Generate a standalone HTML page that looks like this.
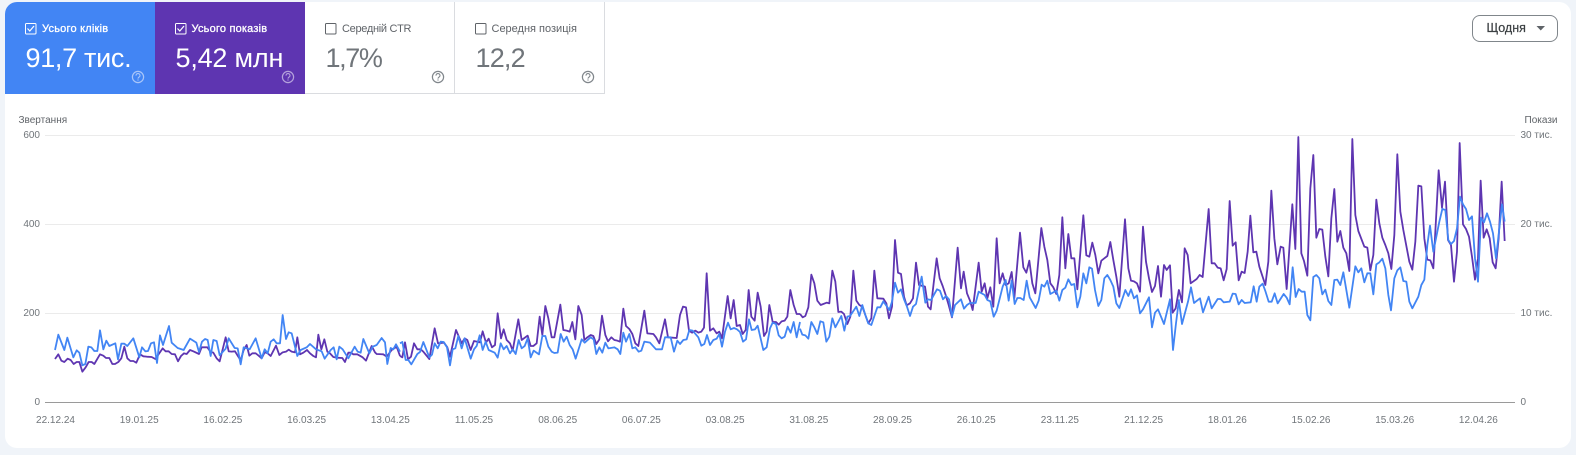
<!DOCTYPE html>
<html lang="uk"><head><meta charset="utf-8"><title>Ефективність</title>
<style>
html,body{margin:0;padding:0;width:1576px;height:455px;overflow:hidden;background:#f0f4f9;font-family:"Liberation Sans",sans-serif}
.abs,.card,.tile{position:absolute}
.card{left:5px;top:2px;width:1566px;height:446px;background:#fff;border-radius:12px}
.tile{top:2px;width:150px;height:92px;box-sizing:border-box}
.lab{position:absolute;left:37px;top:21px;font-size:11px;line-height:13px;white-space:nowrap}
.val{position:absolute;left:20.500px;top:40px;font-size:27px;line-height:32px;white-space:nowrap}
svg.ck{position:absolute;left:20px;top:21px}
svg.hp{position:absolute;left:126px;top:68px}
.t{position:absolute;font-size:10px;line-height:12px;color:#70757a;white-space:nowrap}
.x{top:415px;width:60px;text-align:center}
.yl{left:0;width:40px;text-align:right}
.yr{left:1520.500px}
</style></head><body>
<div class="card"></div>
<div class="tile" style="left:5px;background:#4285f4;color:#fff;border-top-left-radius:12px">
<svg class="ck" width="12" height="12"><rect x=".5" y=".5" width="10.500" height="10.500" rx="1" fill="none" stroke="#fff"/><path d="M2.5 5.500l2.300 2.500 4.200-5" fill="none" stroke="#fff" stroke-width="1.200"/></svg>
<div class="lab" style="-webkit-text-stroke:.3px #fff;letter-spacing:.22px">Усього кліків</div><div class="val" style="letter-spacing:-.3px">91,7 тис.</div>
<svg class="hp" width="14" height="14" fill="none" stroke="#a9c6f9"><circle cx="7" cy="7" r="5.600" stroke-width="1.200"/><path d="M5 5.600c0-2.700 4-2.700 4 0 0 1.400-2 1.500-2 3" stroke-width="1.100"/><path d="M7 9.400v1.200" stroke-width="1.100"/></svg></div>
<div class="tile" style="left:155px;background:#5e35b1;color:#fff">
<svg class="ck" width="12" height="12"><rect x=".5" y=".5" width="10.500" height="10.500" rx="1" fill="none" stroke="#fff"/><path d="M2.5 5.500l2.300 2.500 4.200-5" fill="none" stroke="#fff" stroke-width="1.200"/></svg>
<div class="lab" style="-webkit-text-stroke:.3px #fff;left:36.500px;letter-spacing:.2px">Усього показів</div><div class="val" style="letter-spacing:-.2px">5,42 млн</div>
<svg class="hp" width="14" height="14" fill="none" stroke="#b5a2dc"><circle cx="7" cy="7" r="5.600" stroke-width="1.200"/><path d="M5 5.600c0-2.700 4-2.700 4 0 0 1.400-2 1.500-2 3" stroke-width="1.100"/><path d="M7 9.400v1.200" stroke-width="1.100"/></svg></div>
<div class="tile" style="left:305px;background:#fff;color:#5f6368;border-right:1px solid #dadce0;border-bottom:1px solid #dadce0">
<svg class="ck" width="12" height="12"><rect x=".5" y=".5" width="10.500" height="10.500" rx="1" fill="none" stroke="#5f6368"/></svg>
<div class="lab" style="letter-spacing:-.3px">Середній CTR</div><div class="val" style="color:#70757a;letter-spacing:-1.400px">1,7%</div>
<svg class="hp" width="14" height="14" fill="none" stroke="#80868b"><circle cx="7" cy="7" r="5.600" stroke-width="1.200"/><path d="M5 5.600c0-2.700 4-2.700 4 0 0 1.400-2 1.500-2 3" stroke-width="1.100"/><path d="M7 9.400v1.200" stroke-width="1.100"/></svg></div>
<div class="tile" style="left:455px;background:#fff;color:#5f6368;border-right:1px solid #dadce0;border-bottom:1px solid #dadce0">
<svg class="ck" width="12" height="12"><rect x=".5" y=".5" width="10.500" height="10.500" rx="1" fill="none" stroke="#5f6368"/></svg>
<div class="lab" style="left:36.500px">Середня позиція</div><div class="val" style="color:#70757a;letter-spacing:-.8px">12,2</div>
<svg class="hp" width="14" height="14" fill="none" stroke="#80868b"><circle cx="7" cy="7" r="5.600" stroke-width="1.200"/><path d="M5 5.600c0-2.700 4-2.700 4 0 0 1.400-2 1.500-2 3" stroke-width="1.100"/><path d="M7 9.400v1.200" stroke-width="1.100"/></svg></div>
<div class="abs" style="left:1472px;top:15px;width:86px;height:27px;box-sizing:border-box;border:1px solid #80868b;border-radius:8px"></div>
<div class="abs" style="left:1486.500px;top:20px;font-size:12.500px;line-height:16px;color:#3c4043;-webkit-text-stroke:.2px #3c4043">Щодня</div>
<svg class="abs" style="left:1536px;top:26px" width="10" height="5"><path d="M.5 0h8.500l-4.250 4.500z" fill="#5f6368"/></svg>
<div class="t" style="left:18.500px;top:115px;color:#5f6368">Звертання</div>
<div class="t" style="left:1515px;width:42.500px;text-align:right;top:115px;color:#5f6368">Покази</div>
<div class="t yl" style="top:130px">600</div><div class="t yl" style="top:219px">400</div><div class="t yl" style="top:308px">200</div><div class="t yl" style="top:397px">0</div>
<div class="t yr" style="top:130px">30 тис.</div><div class="t yr" style="top:219px">20 тис.</div><div class="t yr" style="top:308px">10 тис.</div><div class="t yr" style="top:397px">0</div>
<div class="t x" style="left:25.500px">22.12.24</div><div class="t x" style="left:109.200px">19.01.25</div><div class="t x" style="left:192.900px">16.02.25</div><div class="t x" style="left:276.600px">16.03.25</div><div class="t x" style="left:360.300px">13.04.25</div><div class="t x" style="left:444px">11.05.25</div><div class="t x" style="left:527.700px">08.06.25</div><div class="t x" style="left:611.400px">06.07.25</div><div class="t x" style="left:695.100px">03.08.25</div><div class="t x" style="left:778.800px">31.08.25</div><div class="t x" style="left:862.500px">28.09.25</div><div class="t x" style="left:946.200px">26.10.25</div><div class="t x" style="left:1029.900px">23.11.25</div><div class="t x" style="left:1113.600px">21.12.25</div><div class="t x" style="left:1197.300px">18.01.26</div><div class="t x" style="left:1281px">15.02.26</div><div class="t x" style="left:1364.700px">15.03.26</div><div class="t x" style="left:1448.400px">12.04.26</div>
<svg class="abs" style="left:0;top:0" width="1576" height="455">
<g stroke="#ebebeb" stroke-width="1"><path d="M45 135.500H1515M45 224.500H1515M45 313.500H1515"/></g>
<path d="M45 402.500H1515" stroke="#9a9a9a" stroke-width="1"/>
<g fill="none" stroke-width="1.800" stroke-linejoin="round" stroke="#5e35b1">
<polyline vector-effect="non-scaling-stroke" transform="translate(0 290) scale(.33333)" points="165,207 175,193 184,212 193,216 203,206 212,210 221,222 230,216 238,216 247,245 257,232 266,216 275,216 283,222 300,193 310,197 318,204 328,204 337,222 345,222 355,216 364,205 373,170 382,205 391,213 400,213 409,218 420,193 430,199 440,200 455,201 466,207 488,175 497,184 506,184 515,192 525,193 534,214 543,198 552,190 560,192 570,180 580,184 597,192 605,172 622,172 632,186 640,188 650,205 659,214 677,142 686,184 695,185 705,184 713,197 722,211 731,180 740,165 748,197 757,190 767,190 776,197 785,205 794,187 803,190 812,198 828,167 838,195 848,187 858,185 866,179 875,185 885,187 892,142 900,193 910,188 921,180 930,190 940,198 948,202 955,134 964,178 973,148 982,185 990,190 1000,201 1010,203 1027,204 1035,216 1045,188 1053,188 1060,193 1072,193 1088,202 1098,212 1115,168 1125,187 1130,192 1150,193 1160,200 1175,180 1190,170 1200,198"/>
<polyline vector-effect="non-scaling-stroke" transform="translate(400 260) scale(.33333)" points="0,288 7,292 15,247 24,298 33,290 42,250 52,268 62,268 70,275 88,297 104,205 114,250 132,248 142,262 150,290 168,210 185,250 194,235 202,240 212,270 222,243 240,247 248,214 258,248 266,236 276,262 285,255 293,160 303,235 311,208 320,240 330,250 338,272 355,178 365,240 383,227 392,258 400,258 410,250 419,170 427,225 436,138 445,175 455,232 463,232 481,134 490,210 500,212 509,215 517,186 526,238 535,138 545,165 553,240 562,232 572,225 580,228 589,252 598,238 606,167 616,225 624,244 634,232 643,240 652,242 660,245 670,146 678,198 688,207 697,222 706,250 715,258 733,152 742,220 760,222 768,232 778,250 795,178 804,232 830,234 840,165 849,140 858,142 867,212 876,218 886,212 895,218 904,215 912,203 920,40 930,212 940,205 950,220 958,215 966,235 983,108 992,175 1001,120 1010,198 1020,195 1028,222 1037,210 1046,90 1054,170 1064,182 1073,98 1082,140 1092,228 1100,215 1108,135 1118,186 1128,186 1136,194 1145,184 1154,182 1162,170 1171,90 1181,135 1190,162 1200,162"/>
<polyline vector-effect="non-scaling-stroke" transform="translate(780 190) scale(.33333)" points="60,372 68,382 76,378 85,352 94,254 103,280 112,332 122,345 140,338 148,340 157,242 166,275 175,366 184,365 192,372 202,402 211,380 220,242 229,332 238,345 247,350 256,375 265,400 274,385 283,242 292,325 310,326 319,340 327,385 336,350 345,150 354,248 363,252 372,320 380,346 390,340 399,325 408,218 417,285 435,290 444,350 452,358 461,280 470,205 479,265 488,288 497,315 506,345 516,382 533,173 543,295 551,245 561,310 570,332 578,360 596,218 605,305 614,280 622,325 631,292 640,350 650,145 659,280 668,250 677,285 686,280 695,246 703,325 720,128 730,232 739,248 748,212 757,280 766,310 784,114 793,170 802,210 811,280 820,292 829,312 838,255 847,82 856,235 865,132 874,205 883,205 892,298 910,76 919,196 928,200 937,158 946,195 955,250 964,212 973,205 982,198 991,156 1000,210 1009,260 1018,320 1035,88 1045,235 1053,272 1062,274 1071,280 1080,305 1089,110 1098,215 1107,265 1116,306 1125,288 1134,228 1143,320 1152,225 1160,240 1170,226 1178,368 1187,355 1197,298"/>
<polyline vector-effect="non-scaling-stroke" transform="translate(1160 125) scale(.33333)" points="57,495 66,532 74,370 83,390 92,475 110,462 119,450 128,456 146,252 155,415 164,415 173,428 182,430 191,466 200,432 209,228 218,362 227,352 236,466 245,440 254,444 263,380 271,272 280,382 289,380 298,425 316,480 325,410 334,197 343,340 352,418 362,365 370,368 380,492 397,238 406,372 415,36 424,385 432,408 442,452 451,190 460,90 469,338 478,312 487,314 496,395 505,454 514,280 523,192 532,350 541,318 550,368 559,385 568,438 577,42 586,270 595,318 613,365 622,368 631,436 640,390 649,224 658,295 667,338 676,360 685,385 694,432 703,330 712,88 721,260 730,315 748,410 757,434 766,350 775,182 784,184 793,340 802,404 811,406 820,430 836,136 846,248 855,170 864,345 873,360 882,470 891,380 899,54 909,298 918,312 927,335 936,395 945,464 954,400 962,167 971,338 980,313 989,340 998,412 1007,430 1016,340 1025,170 1034,348"/>
</g>
<g fill="none" stroke-width="1.800" stroke-linejoin="round" stroke="#4285f4">
<polyline vector-effect="non-scaling-stroke" transform="translate(0 290) scale(.33333)" points="165,180 175,134 193,180 202,143 220,202 230,181 238,188 247,226 256,222 265,170 274,172 283,183 292,183 300,121 310,178 319,152 328,168 346,160 354,208 364,161 373,161 382,168 400,145 418,202 426,172 436,184 444,183 453,160 462,157 471,219 480,136 489,165 507,108 515,158 533,174 551,180 570,146 589,158 597,186 606,155 615,147 623,150 632,198 640,150 650,153 659,196 677,176 686,145 704,174 713,175 722,223 731,172 749,178 767,145 785,205 794,178 803,190 812,155 821,148 830,160 840,160 848,75 858,147 866,127 875,130 892,198 902,180 920,172 930,162 948,178 965,184 974,206 992,180 1001,172 1010,208 1018,170 1028,178 1045,205 1064,170 1073,185 1082,188 1090,147 1108,190 1118,170 1130,165 1145,144 1155,157 1162,222 1172,174 1180,178 1188,163 1200,185"/>
<polyline vector-effect="non-scaling-stroke" transform="translate(400 260) scale(.33333)" points="0,250 7,246 17,300 25,300 34,313 52,282 60,276 70,246 88,292 96,284 104,250 113,265 122,245 131,246 141,262 150,316 158,268 166,265 175,228 185,265 194,235 212,296 222,268 230,258 239,226 248,270 257,245 266,270 284,278 293,293 302,250 311,268 320,258 330,280 338,268 347,282 356,240 365,265 374,258 383,235 392,292 401,272 417,283 427,228 436,228 445,260 455,275 463,279 473,278 482,222 491,245 500,230 509,255 518,268 527,296 545,238 554,248 572,232 581,238 589,282 598,262 607,278 616,248 625,265 643,262 653,268 661,282 670,218 678,245 688,222 697,265 706,262 716,275 724,272 733,245 750,248 768,268 786,268 795,232 812,232 822,275 832,242 840,252 850,240 860,238 868,210 878,212 895,232 904,257 913,252 921,225 930,255 940,240 950,236 958,222 966,260 975,215 984,188 992,208 1002,204 1011,208 1020,216 1029,245 1038,238 1047,178 1055,210 1065,208 1073,197 1090,270 1100,262 1110,205 1118,188 1128,192 1136,226 1145,235 1154,230 1163,200 1172,218 1181,186 1190,232 1200,186"/>
<polyline vector-effect="non-scaling-stroke" transform="translate(780 190) scale(.33333)" points="60,416 67,434 76,436 85,446 94,396 103,412 112,432 121,394 130,397 139,455 148,440 157,385 166,412 184,378 193,422 202,380 210,378 229,350 238,378 247,345 256,375 265,400 274,405 292,352 301,352 310,334 328,360 336,335 345,278 354,308 363,298 372,328 381,350 390,378 399,350 408,342 425,260 436,338 444,328 453,330 471,298 480,302 489,328 498,318 507,328 516,380 525,345 543,328 552,356 561,345 570,339 587,339 596,305 614,315 622,330 631,334 641,380 650,362 668,290 677,270 686,332 695,272 704,342 712,324 721,324 731,330 740,272 749,322 767,354 776,332 785,284 793,290 802,272 811,312 829,302 838,332 847,300 856,293 865,268 874,285 883,282 892,352 901,320 910,250 919,280 928,232 936,236 945,300 955,348 964,330 973,265 982,255 991,270 1000,290 1009,340 1018,354 1036,300 1045,318 1053,298 1062,325 1071,316 1080,370 1089,358 1107,322 1116,412 1125,368 1134,358 1152,402 1170,328 1179,480 1188,400 1197,328"/>
<polyline vector-effect="non-scaling-stroke" transform="translate(1160 125) scale(.33333)" points="57,530 66,597 84,530 93,487 102,534 120,520 129,562 146,515 155,550 173,522 182,522 191,532 209,530 218,506 227,507 236,538 245,525 254,534 272,532 281,484 290,530 298,485 308,476 316,498 326,530 335,530 344,505 353,535 371,507 380,518 389,538 398,427 407,516 416,492 425,500 434,500 442,570 451,586 460,456 469,450 478,460 487,508 496,494 505,528 514,540 523,465 532,464 541,480 550,442 568,548 586,424 595,442 604,430 613,472 622,445 631,445 640,508 649,418 658,412 667,401 676,430 685,510 693,556 703,460 712,436 721,427 730,468 739,470 748,530 757,550 775,515 784,480 793,464 802,360 810,302 820,380 838,290 847,252 856,255 865,345 873,357 882,348 891,310 900,215 909,238 918,252 927,285 936,274 945,400 954,470 963,278 972,292 981,265 990,290 999,325 1008,400 1026,238 1034,290"/>
</g>
</svg>
</body></html>
